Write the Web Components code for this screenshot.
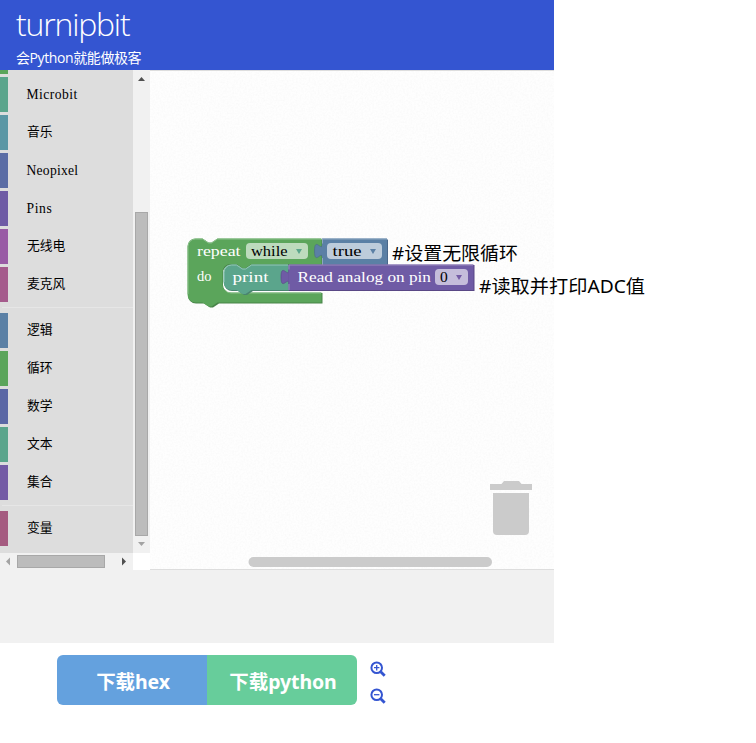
<!DOCTYPE html>
<html lang="zh">
<head>
<meta charset="utf-8">
<title>turnipbit</title>
<style>
body{margin:0;background:#fff;width:756px;height:743px;overflow:hidden;font-family:"Noto Sans","Noto Sans CJK SC",sans-serif}
</style>
</head>
<body>
<turnip-app></turnip-app>
<script>
const define=(name,html,init)=>customElements.define(name,class extends HTMLElement{
  connectedCallback(){
    if(this.shadowRoot)return;
    const t=document.createElement('template');
    t.innerHTML=html;
    this.attachShadow({mode:'open'}).append(t.content.cloneNode(true));
    if(init)init(this,this.shadowRoot);
  }
});

define('app-header',`<style>
:host{display:block;box-sizing:border-box;height:70px;background:#3455d1;color:#fff;padding-left:16px;overflow:hidden}
h1{display:block;margin:0;padding-top:2px;font:300 32px/44px "Open Sans","Noto Sans",sans-serif;height:47px;letter-spacing:-1.2px;white-space:nowrap}
p{display:block;margin:0;font:14px/18px "Open Sans","Noto Sans CJK SC",sans-serif;letter-spacing:-.4px;white-space:nowrap}
</style><h1>turnipbit</h1><p>会Python就能做极客</p>`);

define('tool-category',`<style>
:host{display:flex;align-items:center;height:35px;margin-bottom:3px;border-left:8px solid var(--hue);padding:0 0 1px 19px;color:#000;font:12.8px/16px "Liberation Serif","Noto Sans CJK SC",serif;white-space:nowrap;flex:none;box-sizing:border-box}
:host([latin]){font-size:13.6px;letter-spacing:var(--track,.45px);padding:0 0 0 18.5px}
</style><slot></slot>`);

define('tool-divider',`<style>:host{display:block;flex:none;height:1px;margin:2px 0 5px 2px;background:#e6e6e6}</style>`);

define('scroll-track',`<style>
:host{display:flex;flex-direction:column;align-items:center;background:#f1f1f1;box-sizing:border-box}
:host([horizontal]){flex-direction:row}
i{display:block;box-sizing:border-box;background:#bcbcbc;border:1px solid #a8a8a8;flex:none}
svg{flex:none;width:17px;height:17px}
svg:last-child{margin-left:auto}
:host(:not([horizontal])) svg:last-child{margin:0}
:host(:not([horizontal])) i{width:13px;height:324px;margin-top:125px}
:host([horizontal]) i{width:88px;height:13px}
</style><svg viewBox="0 0 17 17"><path/></svg><i></i><svg viewBox="0 0 17 17"><path/></svg>`,(el,root)=>{
  const p=root.querySelectorAll('path'),h=el.hasAttribute('horizontal');
  p[0].setAttribute('d',h?'M10 4.5v8L6 8.5z':'M5 11h7L8.5 7z');
  p[1].setAttribute('d',h?'M6 4.5v8l4-4z':'M5 6h7L8.5 10z');
  p[0].setAttribute('fill',h?'#a3a3a3':'#505050');
  p[1].setAttribute('fill',h?'#505050':'#a3a3a3');
});

define('block-toolbox',`<style>
:host{display:grid;grid-template:483px 17px / 133px 17px;width:150px;height:500px;background:#fff}
nav{background:#ddd;display:flex;flex-direction:column;overflow:hidden}
tool-category:first-child{height:4px}
</style><nav>
<tool-category style="--hue:#5ba55b"></tool-category>
<tool-category latin style="--hue:#5ba58c">Microbit</tool-category>
<tool-category style="--hue:#5b97a5">音乐</tool-category>
<tool-category latin style="--hue:#5b6da5;--track:.25px">Neopixel</tool-category>
<tool-category latin style="--hue:#6f5ba5;--track:.6px">Pins</tool-category>
<tool-category style="--hue:#995ba5">无线电</tool-category>
<tool-category style="--hue:#a55b8c">麦克风</tool-category>
<tool-divider></tool-divider>
<tool-category style="--hue:#5b80a5">逻辑</tool-category>
<tool-category style="--hue:#5ba55b">循环</tool-category>
<tool-category style="--hue:#5b67a5">数学</tool-category>
<tool-category style="--hue:#5ba58c">文本</tool-category>
<tool-category style="--hue:#745ba5">集合</tool-category>
<tool-divider></tool-divider>
<tool-category style="--hue:#a55b80">变量</tool-category>
</nav><scroll-track></scroll-track><scroll-track horizontal></scroll-track>`);

define('block-workspace',`<style>
:host{display:block;width:404px;height:500px;box-sizing:border-box;background:#fefefe}
svg{display:block;overflow:visible}
.t{font:15.5px "Liberation Serif",serif;fill:#fff}
.k{fill:#000}
.c{font:18.67px "Noto Sans","Noto Sans CJK SC",sans-serif;fill:#000}
.hl{fill:none;stroke-width:1}
</style>
<svg width="404" height="500" viewBox="150 70 404 500">
<defs><filter id="grain" x="0" y="0" width="100%" height="100%">
<feTurbulence type="fractalNoise" baseFrequency=".55" numOctaves="2" seed="4"/>
<feColorMatrix values="0 0 0 0 .5  0 0 0 0 .5  0 0 0 0 .5  .14 0 0 0 -.05"/></filter></defs>
<rect x="150" y="70" width="404" height="500" filter="url(#grain)"/>
<path d="M150 70.5H554M150 569.5H554" stroke="#ddd"/>

<path fill="#fff" d="M223 270h70v22.500h-70z"/>
<path fill="#498449" d="M188.500 247.500a8 8 0 0 1 8-8h7l6 4h3l6-4H322.500V265H252l-6 4h-3l-6-4h-6a8 8 0 0 0-8 8v12a8 8 0 0 0 8 8h91.500v10.500H219l-6 4h-3l-6-4h-8a8 8 0 0 1-8-8z"/>
<path fill="#5ba55b" d="M187.500 246.500a8 8 0 0 1 8-8h7l6 4h3l6-4H321.500V264H251.500l-6 4h-3l-6-4h-6a8 8 0 0 0-8 8v12.500a8 8 0 0 0 8 8h91V302.500H217.500l-6 4h-3l-6-4h-7a8 8 0 0 1-8-8z"/>
<path class="hl" stroke="#8cc08c" d="M188 294V246.500a7.500 7.500 0 0 1 7.500-7.500h7l6 4h3l6-4H321M225 290a8 8 0 0 0 6 3H321"/>

<path fill="#49678a" d="M323 239.500h65V265h-65z"/>
<path fill="#5b80a5" stroke="#49678a" stroke-width=".6" d="M322.500 258.500c0-10-8 8-8-7.500s8 2.500 8-7.500z"/>
<path fill="#5b80a5" d="M322 238.500h65V264h-65z"/>
<path class="hl" stroke="#8ca6c0" d="M387 239H322.500v4.500M322.500 258v6"/>

<path fill="#49846f" d="M224 273a8 8 0 0 1 8-8h5l6 4h3l6-4h37v26h-36l-6 4h-3l-6-4h-6a8 8 0 0 1-8-8z"/>
<path fill="#5ba58c" d="M223.500 272.500a8 8 0 0 1 8-8h5l6 4h3l6-4h37V290h-37l-6 4h-3l-6-4h-5a8 8 0 0 1-8-8z"/>
<path class="hl" stroke="#94c9b7" d="M224 282v-9.500a7.500 7.500 0 0 1 7.500-7.500h5l6 4h3l6-4h36.500"/>

<path fill="#594785" d="M289 265h185.500v26H289z"/>
<path fill="#6f5ba5" stroke="#594785" stroke-width=".6" d="M289 284.500c0-10-8 8-8-7.500s8 2.500 8-7.500z"/>
<path fill="#6f5ba5" d="M288.500 264.500H473.500V290h-185z"/>
<path class="hl" stroke="#9c8cc0" d="M473 265H289v4.500M289 284v6"/>

<g fill="#fff" fill-opacity=".6">
<rect x="246" y="243" width="62" height="16" rx="4"/>
<rect x="327" y="243" width="55" height="16" rx="4"/>
<rect x="435" y="269" width="33" height="16" rx="4"/></g>
<path fill="#5ba58c" d="M296 249h6l-3 5z"/><path fill="#5b80a5" d="M370 249h6l-3 5z"/><path fill="#745ba5" d="M456 275h6l-3 5z"/>
<g>
<text class="t" x="197" y="256" textLength="43.500" lengthAdjust="spacingAndGlyphs">repeat</text>
<text class="t k" x="251" y="256" textLength="36.500" lengthAdjust="spacingAndGlyphs">while</text>
<text class="t k" x="332.500" y="256" textLength="29" lengthAdjust="spacingAndGlyphs">true</text>
<text class="t" x="197" y="281" textLength="14.500" lengthAdjust="spacingAndGlyphs">do</text>
<text class="t" x="232.500" y="282" textLength="36" lengthAdjust="spacingAndGlyphs">print</text>
<text class="t" x="297.500" y="282" textLength="133.500" lengthAdjust="spacingAndGlyphs">Read analog on pin</text>
<text class="t k" x="440" y="282">0</text></g>
<text class="c" x="392" y="260" textLength="126" lengthAdjust="spacingAndGlyphs">#设置无限循环</text>
<text class="c" x="479" y="292.500" textLength="166" lengthAdjust="spacingAndGlyphs">#读取并打印ADC值</text>

<g fill="#cbcbcb"><path d="M490 484h11.500l2.500-3h15l2.500 3H532v6H490z"/><path d="M493 493h36v38a4 4 0 0 1-4 4h-28a4 4 0 0 1-4-4z"/>
<rect x="248.500" y="557" width="243.500" height="10" rx="5"/></g>
</svg>`);

define('download-button',`<style>
:host{display:flex;align-items:center;justify-content:center;width:150px;height:50px;background:var(--fill);color:#fff;font:bold 19.5px/28px "Noto Sans","Noto Sans CJK SC",sans-serif;white-space:nowrap;box-sizing:border-box;padding:3px 0 0 2px;letter-spacing:-.1px}
</style><slot></slot>`);

define('zoom-icon',`<style>:host{display:block;width:16px;height:16px}svg{display:block}</style>
<svg width="16" height="16" viewBox="0 0 16 16" fill="none" stroke="#3455d1"><circle cx="6.700" cy="6.700" r="5.300" stroke-width="2"/><path d="M10.700 10.700l4 4" stroke-width="2.800"/><path id="sign" stroke-width="1.300"/></svg>`,(el,root)=>{
  root.querySelector('#sign').setAttribute('d',el.hasAttribute('plus')?'M4 6.700h5.400M6.700 4v5.400':'M4 6.700h5.400');
});

define('app-actions',`<style>
:host{display:flex;padding:12px 0 0 57px}
.pair{display:flex;border-radius:6px;overflow:hidden;height:50px}
.zoom{display:grid;gap:11px;padding:6px 0 0 13px;align-content:start}
</style><div class="pair"><download-button style="--fill:#64a1de">下载hex</download-button><download-button style="--fill:#67cd9b">下载python</download-button></div>
<div class="zoom"><zoom-icon plus></zoom-icon><zoom-icon></zoom-icon></div>`);

define('turnip-app',`<style>
:host{display:block}
main{width:554px;height:643px;background:#f1f1f1}
.editor{display:flex}
</style><main><app-header></app-header><div class="editor"><block-toolbox></block-toolbox><block-workspace></block-workspace></div></main><app-actions></app-actions>`);
</script>
</body>
</html>
